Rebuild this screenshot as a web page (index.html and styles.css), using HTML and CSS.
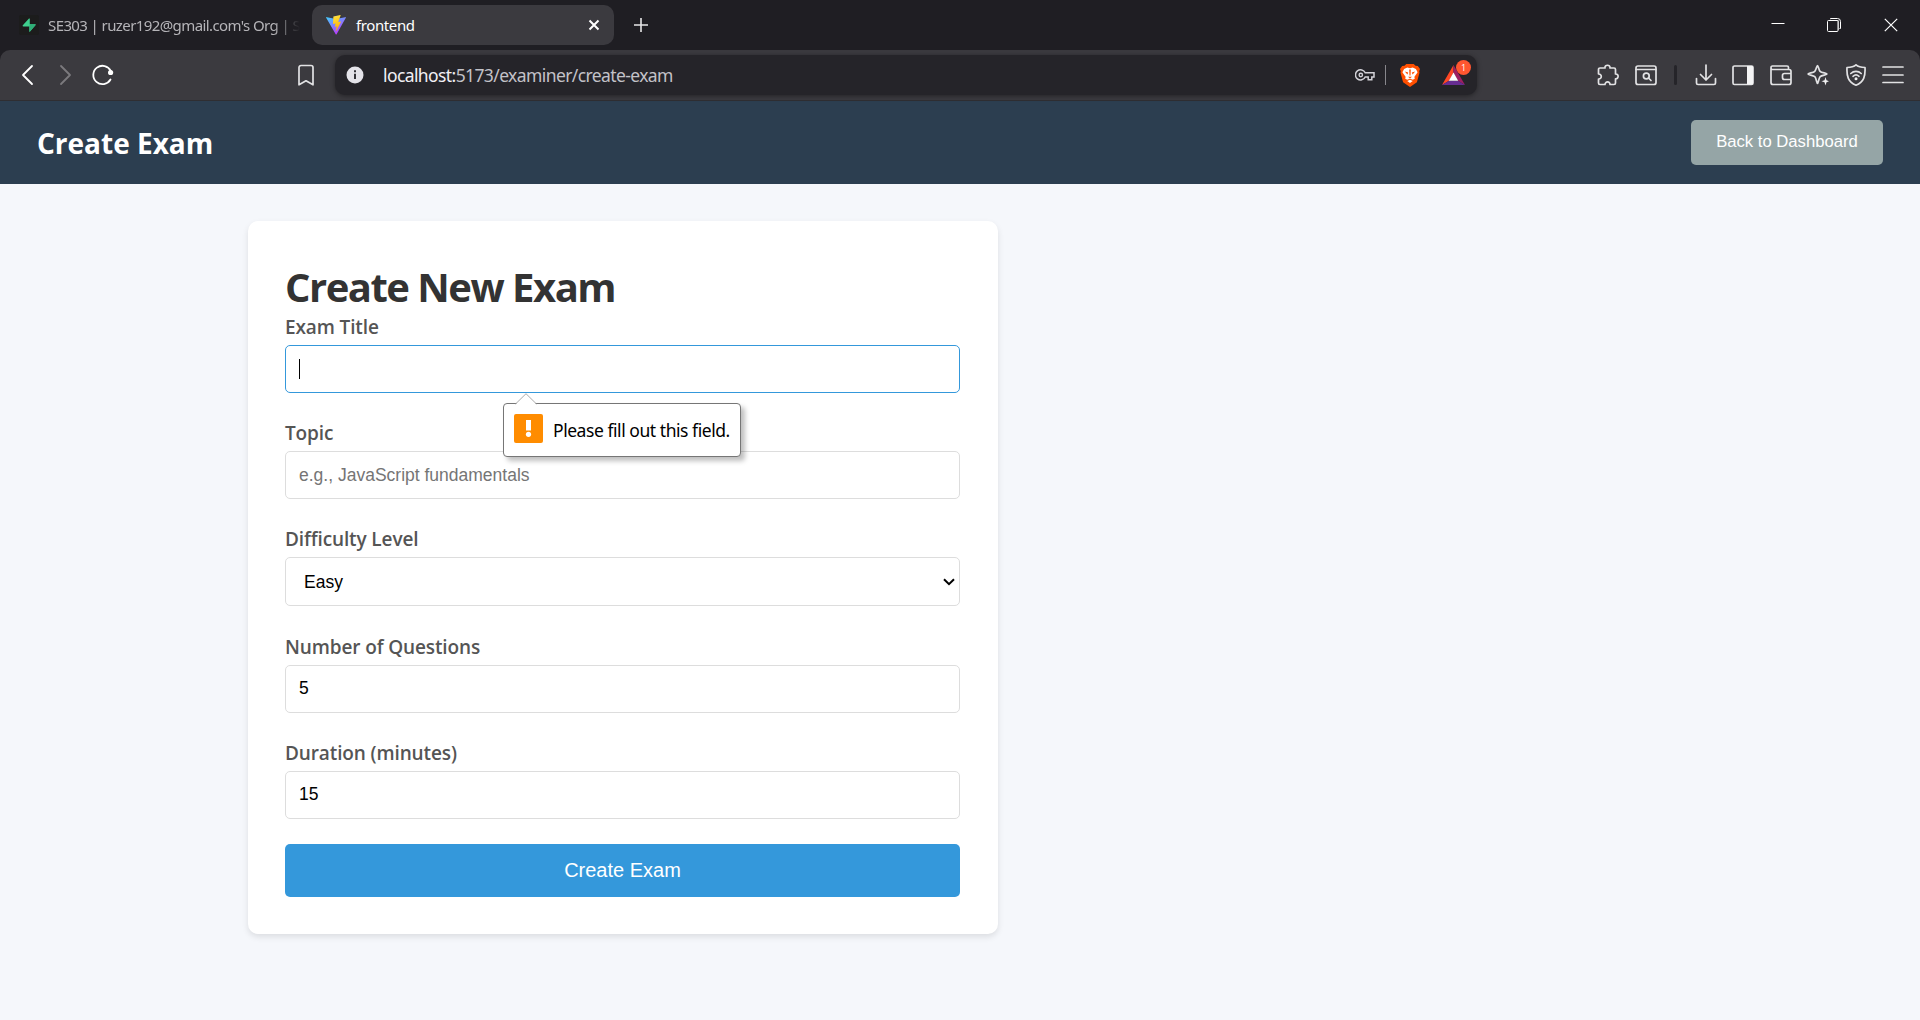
FILE: index.html
```html
<!DOCTYPE html>
<html lang="en">
<head>
<meta charset="utf-8">
<title>frontend</title>
<link rel="stylesheet" href="styles.css">
</head>
<body>
<div class="tabstrip">
  <div class="tab">
    <svg class="favicon" width="20" height="20" viewBox="0 0 20 20"><rect width="20" height="20" rx="2" fill="#1c1c1c"/><path d="M10.8 3.8v5.4h5.2c.6 0 .8.6.4 1L11 16.6c-.3.3-.6.2-.6-.2v-5H4.300c-.7 0-.9-.6-.5-1.100l6.200-6.700c.4-.4.8-.2.8.2z" fill="#3ecf8e"/><path d="M10.800 9.200h5.200c.6 0 .8.6.4 1L11 16.600c-.3.3-.6.2-.6-.2v-5z" fill="#2fae77"/></svg>
    <span class="tab-title tab-title-fade">SE303 | ruzer192@gmail.com's Org | S</span>
  </div>
  <div class="tab tab-active">
    <svg class="favicon" width="20" height="20" viewBox="0 0 20 20"><defs><linearGradient id="va" x1="0" y1="0" x2=".6" y2="1"><stop offset="0" stop-color="#41d1ff"/><stop offset="1" stop-color="#bd34fe"/></linearGradient><linearGradient id="vb" x1=".4" y1="0" x2=".6" y2="1"><stop offset="0" stop-color="#ffea83"/><stop offset=".1" stop-color="#ffdd35"/><stop offset="1" stop-color="#ffa800"/></linearGradient></defs><path d="M19.700 3 10.600 19.200a.5.5 0 0 1-.9 0L.3 3a.5.5 0 0 1 .6-.8L10 3.900l9.100-1.700a.5.5 0 0 1 .6.800z" fill="url(#va)"/><path d="M14.300.1 7.600 1.400a.3.3 0 0 0-.2.2L7 8.600c0 .2.100.3.300.3l1.900-.5c.2 0 .3.200.3.300l-.6 2.700c0 .2.200.4.400.3l1.100-.3c.2-.1.400.1.300.3l-.9 4.200c0 .3.300.400.500.2l4.600-9.100c.1-.2-.1-.4-.3-.4l-2 .4c-.2 0-.3-.1-.3-.3L14.600.4c0-.2-.1-.3-.3-.3z" fill="url(#vb)"/></svg>
    <span class="tab-title">frontend</span>
    <svg class="tab-close" width="12" height="12" viewBox="0 0 12 12"><path d="M1.500 1.500l9 9M10.500 1.500l-9 9" stroke="#fff" stroke-width="2"/></svg>
  </div>
  <svg class="new-tab" width="14" height="14" viewBox="0 0 14 14"><path d="M7 0v14M0 7h14" stroke="#e6e6e8" stroke-width="1.600"/></svg>
  <div class="window-controls">
    <svg class="minimize" width="14" height="14" viewBox="0 0 14 14"><path d="M.5 5.500h13" stroke="#fff"/></svg>
    <svg width="14" height="14" viewBox="0 0 14 14" fill="none" stroke="#fff"><path d="M3.500 1.200V.5h7a3 3 0 0 1 3 3v7h-1"/><path d="M2 2.500h9.500V12" stroke="#9a9a9c"/><rect x=".5" y="2.500" width="10.500" height="11" rx="1"/></svg>
    <svg width="14" height="14" viewBox="0 0 14 14"><path d="M.8.8l12.400 12.400M13.200.8L.8 13.200" stroke="#fff" stroke-width="1.200"/></svg>
  </div>
</div>
<div class="toolbar-wrap">
  <div class="toolbar">
    <div class="nav">
      <svg width="22" height="22" viewBox="0 0 22 22"><path d="M16 2 7 11l9 9" class="line strong"/></svg>
      <svg width="22" height="22" viewBox="0 0 22 22"><path d="M7 2l9 9-9 9" class="line dim"/></svg>
      <svg width="22" height="22" viewBox="0 0 22 22"><path d="M18.500 15.500A9.200 9.200 0 1 1 18.800 7" class="line strong"/><circle cx="18.600" cy="8.500" r="2.600" fill="#fff"/></svg>
    </div>
    <svg class="bookmark" width="18" height="22" viewBox="0 0 18 22"><path d="M2 3.500A2 2 0 0 1 4 1.500h10a2 2 0 0 1 2 2v17.300l-7-4-7 4z" class="line"/></svg>
    <div class="omnibox">
      <svg class="site-info" width="18" height="18" viewBox="0 0 18 18"><circle cx="9" cy="9" r="8.500" fill="#e4e3e9"/><path d="M9 4.300v2M9 7.800v5.200" stroke="#29282e" stroke-width="1.900"/></svg>
      <span class="url">localhost:<span class="url-path">5173/examiner/create-exam</span></span>
      <svg class="key" width="20" height="14" viewBox="0 0 20 14"><path d="M10.200 4.800A5.100 5.100 0 1 0 10.200 9h3v2.700h3.600V9H19V4.800z" fill="none" stroke="#d3d2d8" stroke-width="1.500"/><circle cx="5.800" cy="7" r="1.700" fill="none" stroke="#d3d2d8" stroke-width="1.400"/></svg>
      <span class="omni-sep"></span>
      <svg class="brave" width="20" height="23" viewBox="0 0 20 23"><path d="M4.500 1.800 6.300 0h7.400l1.800 1.800 2.300.3L20 5l-.8 2.300.3 1.500-2.600 9.500L10 23l-6.900-4.700L.5 8.800l.3-1.500L0 5l2.200-2.900z" fill="#ff4f00"/><path d="M10 4.200l2.700-.6 3.200 1.300 1.700 3.300-3.300 4.900.6 1.500-2 1.200-2.900-1-2.900 1-2-1.200.6-1.500-3.300-4.900 1.700-3.300 3.200-1.300zM7.200 17l2.800-1.300 2.800 1.300-2.800 2z" fill="#fff"/><path d="M4.800 7.500l3.400.9-.8 2zM15.200 7.500l-3.400.9.8 2zM9.200 5.500h1.600l-.3 6h-1zM8 12.800h4l-2 1.700z" fill="#ff4f00"/></svg>
      <span class="rewards">
        <svg width="23" height="20" viewBox="0 0 23 20"><path d="M11.500 0 0 20l7-4.300 4.500-8z" fill="#ff4724"/><path d="M11.500 0 23 20l-7-4.300-4.500-8z" fill="#9e1f63"/><path d="M0 20h23l-7-4.300H7z" fill="#662d91"/><path d="M11.500 7.500 16.200 15.700H6.800z" fill="#fff"/></svg>
        <span class="badge">1</span>
      </span>
    </div>
    <div class="actions">
      <svg width="22" height="22" viewBox="0 0 22 22"><path d="M3 4h5c-.6-3.700 5.500-3.700 5 0h4a1.500 1.500 0 0 1 1.500 1.500V10c3.500-.3 3.500 5 0 4.800V19a1.500 1.500 0 0 1-1.500 1.500h-4c.3-3.500-5-3.500-5 0H3A1.500 1.500 0 0 1 1.500 19v-4c3.700.2 3.700-5.200 0-5V5.500A1.500 1.500 0 0 1 3 4z" class="line"/></svg>
      <svg width="22" height="22" viewBox="0 0 22 22"><rect x="1" y="2" width="20" height="18.500" rx="2" class="line"/><path d="M1 5.500h20M13.500 14l2.500 2.500" class="line"/><circle cx="11.300" cy="12" r="2.900" class="line"/></svg>
      <span class="action-sep"></span>
      <svg width="22" height="22" viewBox="0 0 22 22"><path d="M11 1v15M5.500 10.500 11 16l5.500-5.500M1.500 14.500V19a1.500 1.500 0 0 0 1.500 1.500h16a1.500 1.500 0 0 0 1.500-1.500v-4.500" class="line"/></svg>
      <svg width="22" height="22" viewBox="0 0 22 22"><rect x="1" y="2" width="20" height="18.500" rx="1.500" class="line"/><path d="M15 2h5a1 1 0 0 1 1 1v16.500a1 1 0 0 1-1 1h-5z" fill="#f4f4f5"/></svg>
      <svg width="22" height="22" viewBox="0 0 22 22"><path d="M1 4v14.500a2 2 0 0 0 2 2h16a2 2 0 0 0 2-2V7.500a2 2 0 0 0-2-2H2.500C.5 5.500.5 2 2.500 2H17a1.500 1.500 0 0 1 1.500 1.500v2M21 9.500h-6.500a2 2 0 0 0-2 2v2a2 2 0 0 0 2 2H21" class="line"/></svg>
      <svg width="22" height="22" viewBox="0 0 22 22"><path d="M10.500 1.500c.8 0 1.200 4.300 2.600 5.800S20 9 20 10s-5.300 1.300-6.800 2.700-1.900 6.800-2.700 6.800-1.200-5.300-2.700-6.800S1 11 1 10s5.300-1.200 6.800-2.700S9.700 1.500 10.500 1.500z" class="line"/><path d="M18.500 13l1 3.200 2.500 1-2.500 1-1 3.200-1-3.200-3-1 3-1z" fill="#f0f0f1"/></svg>
      <svg width="22" height="22" viewBox="0 0 22 22"><path d="M11 .8C13 2.500 16 3.300 20 3.500c.5 8.500-1 14.500-9 17.700C3 18 1.500 12 2 3.500 6 3.300 9 2.500 11 .8z" class="line"/><path d="M5.800 9.500c3-2.800 7.400-2.800 10.400 0M8 12.300c1.800-1.600 4.200-1.600 6 0" class="line"/><circle cx="11" cy="14.800" r="1.500" fill="#f0f0f1"/></svg>
      <svg width="22" height="22" viewBox="0 0 22 22"><path d="M1 3h20M1 11h20M1 18.500h20" class="line"/></svg>
    </div>
  </div>
</div>
<header class="page-header">
  <h1 class="page-title">Create Exam</h1>
  <button class="back-btn">Back to Dashboard</button>
</header>
<main class="content">
  <form class="card">
    <h2 class="card-title">Create New Exam</h2>
    <label class="label">Exam Title</label>
    <div class="control control-focus">
      <span class="caret"></span>
      <div class="tooltip">
        <svg class="tooltip-arrow" width="22" height="12" viewBox="0 0 22 12"><path d="M.5 11.500 11 1l10.500 10.500V12H.5z" fill="#fff"/><path d="M.5 11 11 .7 21.500 11" fill="none" stroke="#aaa"/></svg>
        <svg width="29" height="29" viewBox="0 0 29 29"><rect width="29" height="29" rx="2" fill="#ff8c00"/><path d="M12 6h5v10.500h-5z" fill="#fff"/><circle cx="14.500" cy="20.300" r="2.600" fill="#fff"/></svg>
        <span class="tooltip-text">Please fill out this field.</span>
      </div>
    </div>
    <label class="label">Topic</label>
    <div class="control placeholder">e.g., JavaScript fundamentals</div>
    <label class="label">Difficulty Level</label>
    <div class="control control-select"><span>Easy</span><svg width="12" height="8" viewBox="0 0 12 8"><path d="M1 1.200l5 5 5-5" fill="none" stroke="#000" stroke-width="2"/></svg></div>
    <label class="label label-tall">Number of Questions</label>
    <div class="control">5</div>
    <label class="label">Duration (minutes)</label>
    <div class="control">15</div>
    <button class="submit" type="button">Create Exam</button>
  </form>
</main>
</body>
</html>
```
FILE: styles.css
```css
* { box-sizing: border-box; }
body {
  margin: 0;
  height: 1020px;
  overflow: hidden;
  background: #f5f7fb;
  font-family: "Open Sans", "Noto Sans", sans-serif;
}
svg { display: block; flex: none; }
button { border: 0; font-family: "Liberation Sans", Arial, sans-serif; color: #fff; }

/* Browser tabs */
.tabstrip { display: flex; align-items: center; height: 50px; background: #1f1e23; }
.tab { display: flex; align-items: center; width: 312px; height: 40px; padding-left: 19px; color: #b5b4b8; }
.tab-title { margin-left: 10px; font: 15px/20px "Noto Sans", sans-serif; letter-spacing: -0.4px; white-space: nowrap; }
.tab-title-fade {
  margin-left: 9px;
  letter-spacing: -0.6px;
  -webkit-mask-image: linear-gradient(90deg, #000 225px, transparent 252px);
  mask-image: linear-gradient(90deg, #000 225px, transparent 252px);
}
.tab-active { width: 302px; padding: 0 14px; border-radius: 10px; background: #3b3a3f; color: #fff; }
.tab-close { margin-left: auto; }
.new-tab { margin-left: 20px; }
.window-controls { display: flex; gap: 43px; margin-left: auto; padding-right: 22px; }
.minimize { margin-right: -1px; }

/* Browser toolbar */
.toolbar-wrap { background: #1f1e23; }
.toolbar {
  display: flex;
  align-items: center;
  height: 51px;
  padding: 0 16px;
  border-bottom: 1px solid #2f2e32;
  border-radius: 10px 10px 0 0;
  background: #3b3a3f;
}
.line { fill: none; stroke: #e2e2e4; stroke-width: 1.7; stroke-linejoin: round; stroke-linecap: round; }
.strong { stroke: #fff; stroke-width: 1.8; }
.dim { stroke: #7b7a7e; stroke-width: 1.8; }
.nav { display: flex; gap: 16px; }
.bookmark { margin-left: 183px; }
.omnibox {
  display: flex;
  align-items: center;
  width: 1142px;
  height: 40px;
  margin-left: 20px;
  padding: 0 12px 0 11px;
  border-radius: 10px;
  background: #252429;
  box-shadow: 0 1px 5px rgba(0, 0, 0, .4);
}
.url { margin-left: 19px; color: #f1f0f5; font: 17.5px/24px "Noto Sans", sans-serif; letter-spacing: -0.6px; white-space: nowrap; }
.url-path { color: #c3c2c8; }
.key { margin-left: auto; }
.omni-sep { width: 1px; height: 20px; margin: 0 14px 0 10px; background: #88878c; }
.rewards { position: relative; margin-left: 22px; }
.badge {
  position: absolute;
  top: -5px;
  left: 14px;
  width: 15px;
  height: 15px;
  border-radius: 50%;
  background: #ff5630;
  color: #fff;
  font: 9px/15px "Open Sans", sans-serif;
  text-align: center;
}
.actions { display: flex; align-items: center; gap: 15.500px; margin-left: auto; }
.action-sep { width: 3px; height: 20px; margin: 0 2px; border-radius: 2px; background: #252429; }

/* Page header */
.page-header { display: flex; align-items: center; justify-content: space-between; height: 83px; padding: 0 37px; background: #2c3e50; }
.page-title { margin: 0; color: #fff; font-size: 28px; line-height: 40px; }
.back-btn { width: 192px; height: 45px; padding: 0 0 2px; border-radius: 5px; background: #95a5a6; font-size: 16.67px; }

/* Exam form */
.content { padding: 37px 0 0 248px; }
.card {
  display: flex;
  flex-direction: column;
  width: 750px;
  height: 713px;
  padding: 41px 38px 37px 37px;
  border-radius: 10px;
  background: #fff;
  box-shadow: 0 3px 6px rgba(0, 0, 0, .1);
}
.card-title { margin: 0; height: 50px; color: #333; font-size: 40px; line-height: 50px; letter-spacing: -1.5px; }
.label { height: 33px; color: #555; font-size: 19px; font-weight: 600; line-height: 31px; letter-spacing: -0.12px; }
.control + .label { margin-top: 25px; }
.control + .label-tall { margin-top: 26px; }
.control {
  position: relative;
  display: flex;
  align-items: center;
  height: 48px;
  padding: 0 12px 2px 13px;
  border: 1px solid #ddd;
  border-radius: 5px;
  color: #000;
  font: 17.500px/24px "Liberation Sans", Arial, sans-serif;
}
.control-focus { padding-bottom: 0; border-color: #3498db; }
.placeholder { padding-bottom: 0; color: #757575; }
.control-select { justify-content: space-between; height: 49px; padding: 0 4px 0 18px; }
.caret { width: 1px; height: 20px; background: #000; }
.submit { height: 53px; margin-top: 25px; border-radius: 5px; background: #3498db; font-size: 20px; }

/* Validation bubble */
.tooltip {
  position: absolute;
  z-index: 1;
  top: 57px;
  left: 217px;
  display: flex;
  align-items: center;
  width: 238px;
  height: 54px;
  padding: 0 10px 3px;
  border: 1px solid #767676;
  border-radius: 4px;
  background: #fff;
  box-shadow: 4px 4px 5px rgba(0, 0, 0, .25);
}
.tooltip-arrow { position: absolute; top: -11px; left: 11px; }
.tooltip-text { margin: 3px 0 0 10px; font: 17.500px/24px "Noto Sans", sans-serif; letter-spacing: -0.45px; white-space: nowrap; }
```
